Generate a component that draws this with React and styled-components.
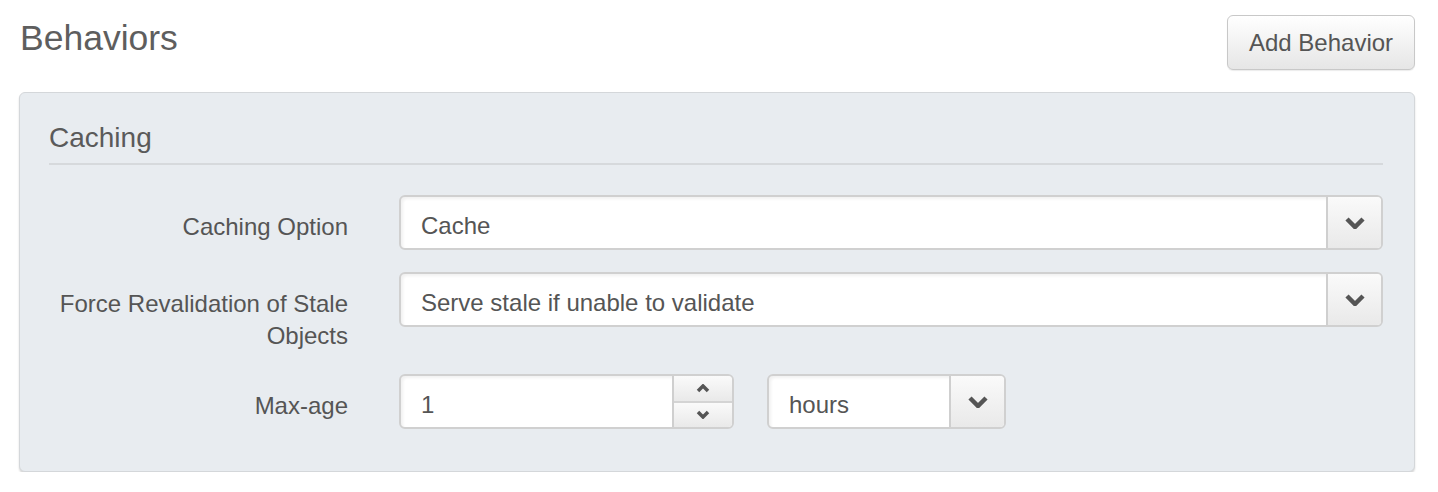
import React from 'react'
import styled, { createGlobalStyle } from 'styled-components'

const GlobalStyle = createGlobalStyle`
    body {
        margin: 0;
        background: #fff;
        font-family: "Liberation Sans", Arial, Helvetica, sans-serif;
        color: #555;
    }
`

const Page = styled.div`
    padding: 15px 23px 0 19px;
`
const Header = styled.div`
    display: flex;
    justify-content: space-between;
    align-items: flex-start;
    margin-bottom: 22px;
`
const Title = styled.h1`
    margin: 3px 0 0 1px;
    font-size: 35.5px;
    line-height: 40px;
    font-weight: 400;
    color: #5e5e5e;
`
const Button = styled.button`
    height: 55px;
    width: 188px;
    padding: 0;
    font-family: inherit;
    font-size: 24px;
    color: #555;
    background: linear-gradient(#fff, #e6e6e6);
    border: 1px solid #c8c8c8;
    border-radius: 6px;
    box-shadow: 0 1px 1px rgba(0,0,0,0.08);
`
const Panel = styled.section`
    background: #e8ecf0;
    border: 1px solid #d4d7da;
    border-radius: 6px;
    box-shadow: 0 2px 2px rgba(0,0,0,0.16);
    padding: 29px 31px 21px 29px;
    height: 380px;
    box-sizing: border-box;
`
const PanelTitle = styled.h2`
    margin: 0;
    font-size: 28px;
    line-height: 32px;
    font-weight: 400;
    color: #5a5a5a;
    padding-bottom: 9px;
    border-bottom: 2px solid #d6d9dc;
    margin-bottom: 30px;
`
const Row = styled.div`
    display: grid;
    grid-template-columns: 299px 1fr;
    column-gap: 51px;
    align-items: start;
    margin-bottom: 22px;
`
const Label = styled.label`
    text-align: right;
    font-size: 24px;
    line-height: 32px;
    padding-top: 16px;
    color: #555;
`
const Field = styled.div`
    display: flex;
    height: 55px;
    width: ${({ width }) => width || 'auto'};
    box-sizing: border-box;
    background: #fff;
    border: 2px solid #d0d0d0;
    border-radius: 6px;
    overflow: hidden;
    box-shadow: inset 2px 2px 3px rgba(0,0,0,0.06);
`
const Value = styled.div`
    flex: 1;
    display: flex;
    align-items: center;
    padding: 6px 0 0 20px;
    font-size: 24px;
    color: #555;
`
const Toggle = styled.div`
    width: 53px;
    display: flex;
    align-items: center;
    justify-content: center;
    background: linear-gradient(#fafafa, #e9e9e9);
    border-left: 2px solid #cfcfcf;
    color: #555;
`
const Spinner = styled.div`
    width: 58px;
    display: flex;
    flex-direction: column;
    border-left: 2px solid #cfcfcf;
`
const SpinButton = styled.div`
    flex: 1;
    display: flex;
    align-items: center;
    justify-content: center;
    background: linear-gradient(#fafafa, #e9e9e9);
    & + & {
        border-top: 2px solid #d4d4d4;
    }
`
const Inline = styled.div`
    display: flex;
    gap: 33px;
`

const Chevron = ({ up, w = 20, h = 12, stroke = 4.5 }) => (
    <svg width={w} height={h} viewBox={`0 0 ${w} ${h}`}>
        <polyline
            points={up
                ? `2,${h - 2} ${w / 2},2 ${w - 2},${h - 2}`
                : `2,2 ${w / 2},${h - 2} ${w - 2},2`}
            fill="none"
            stroke="#555"
            strokeWidth={stroke}
        />
    </svg>
)

const Select = ({ value, width }) => (
    <Field width={width}>
        <Value>{value}</Value>
        <Toggle><Chevron /></Toggle>
    </Field>
)

export default function App() {
    return (
        <Page>
            <GlobalStyle />
            <Header>
                <Title>Behaviors</Title>
                <Button>Add Behavior</Button>
            </Header>
            <Panel>
                <PanelTitle>Caching</PanelTitle>
                <Row>
                    <Label>Caching Option</Label>
                    <Select value="Cache" />
                </Row>
                <Row>
                    <Label>Force Revalidation of Stale Objects</Label>
                    <Select value="Serve stale if unable to validate" />
                </Row>
                <Row>
                    <Label>Max-age</Label>
                    <Inline>
                        <Field width="335px">
                            <Value>1</Value>
                            <Spinner>
                                <SpinButton><Chevron up w={14} h={9} stroke={3.5} /></SpinButton>
                                <SpinButton><Chevron w={14} h={9} stroke={3.5} /></SpinButton>
                            </Spinner>
                        </Field>
                        <Select value="hours" width="239px" />
                    </Inline>
                </Row>
            </Panel>
        </Page>
    )
}
